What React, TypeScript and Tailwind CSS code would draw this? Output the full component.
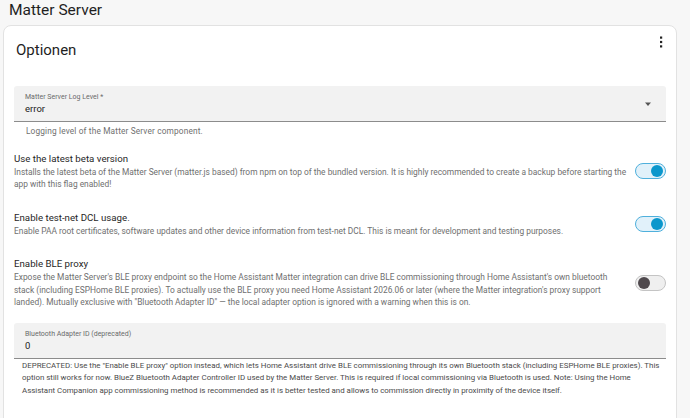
import React from "react"

// settings rows on the options card
const rows = [
  {
    title: "Use the latest beta version",
    desc: "Installs the latest beta of the Matter Server (matter.js based) from npm on top of the bundled version. It is highly recommended to create a backup before starting the app with this flag enabled!",
    on: true,
  },
  {
    title: "Enable test-net DCL usage.",
    desc: "Enable PAA root certificates, software updates and other device information from test-net DCL. This is meant for development and testing purposes.",
    on: true,
  },
  {
    title: "Enable BLE proxy",
    desc: "Expose the Matter Server's BLE proxy endpoint so the Home Assistant Matter integration can drive BLE commissioning through Home Assistant's own bluetooth stack (including ESPHome BLE proxies). To actually use the BLE proxy you need Home Assistant 2026.06 or later (where the Matter integration's proxy support landed). Mutually exclusive with \"Bluetooth Adapter ID\" — the local adapter option is ignored with a warning when this is on.",
    on: false,
  },
]

function Toggle({ on }: { on: boolean }) {
  return (
    <div
      className={`relative w-[31px] h-[16px] rounded-full border shrink-0 ${
        on ? "bg-[#e1f1fa] border-[#4fb0dc]" : "bg-[#efefef] border-[#c4c4c4]"
      }`}
    >
      <div
        className={`absolute top-[1px] w-[12px] h-[12px] rounded-full ${
          on ? "right-[2px] bg-[#0b97cc]" : "left-[2px] bg-[#4f494d]"
        }`}
      />
    </div>
  )
}

function Field({ label, value, arrow }: { label: string; value: string; arrow?: boolean }) {
  return (
    <div className="h-[36px] bg-[#f2f2f2] border-b border-[#8c8c8c] rounded-t-[3px] px-[11px] flex items-center">
      <div className="flex-1 pt-[1px]">
        <div className="text-[7px] leading-[10px] text-[#6a6a6a]">{label}</div>
        <div className="text-[9.5px] leading-[14px] text-[#1c1c1c]">{value}</div>
      </div>
      {arrow && (
        <svg width="8" height="5" viewBox="0 0 8 5" className="mr-[3px] mt-[2px]">
          <path d="M1 0.5h6L4 4z" fill="#555" />
        </svg>
      )}
    </div>
  )
}

export default function App() {
  return (
    <div
      className="w-[690px] h-[418px] overflow-hidden bg-[#f7f7f7]"
      style={{ fontFamily: "Roboto, 'Liberation Sans', sans-serif" }}
    >
      <h1 className="px-[9px] h-[25px] text-[15.5px] leading-[20px] text-[#1f1f1f]">Matter Server</h1>

      <div className="ml-[3px] w-[674px] bg-white border border-[#e2e2e2] rounded-[8px] pb-[40px]">
        {/* card header */}
        <div className="flex items-start justify-between pl-[12px] pr-[9px] pt-[12px] h-[60px]">
          <h2 className="text-[15px] leading-[24px] text-[#1f1f1f]">Optionen</h2>
          <svg width="12" height="14" viewBox="0 0 12 14" className="-mt-[3px]">
            <rect x="5" y="1.5" width="2.2" height="2.2" fill="#222" />
            <rect x="5" y="5.9" width="2.2" height="2.2" fill="#222" />
            <rect x="5" y="10.3" width="2.2" height="2.2" fill="#222" />
          </svg>
        </div>

        <div className="px-[10px]">
          <Field label="Matter Server Log Level *" value="error" arrow />
          <p className="pl-[12px] pt-[3px] text-[8.3px] leading-[12.5px] tracking-[0.15px] text-[#6f6f6f]">
            Logging level of the Matter Server component.
          </p>

          <div className="pt-[14px] flex flex-col gap-[20px]">
            {rows.map((row) => (
              <div key={row.title} className="flex items-center gap-[7px]">
                <div className="flex-1">
                  <div className="text-[9.7px] leading-[14px] text-[#1f1f1f]">{row.title}</div>
                  <div className="text-[8.4px] leading-[12.5px] text-[#6f6f6f]">{row.desc}</div>
                </div>
                <Toggle on={row.on} />
              </div>
            ))}
          </div>

          <div className="pt-[14px]">
            <Field label="Bluetooth Adapter ID (deprecated)" value="0" />
            <p className="pl-[8px] pr-[4px] pt-[1px] text-[7.9px] leading-[12.6px] text-[#4a4a4a]">
              DEPRECATED: Use the "Enable BLE proxy" option instead, which lets Home Assistant drive BLE commissioning
              through its own Bluetooth stack (including ESPHome BLE proxies). This option still works for now. BlueZ
              Bluetooth Adapter Controller ID used by the Matter Server. This is required if local commissioning via
              Bluetooth is used. Note: Using the Home Assistant Companion app commissioning method is recommended as it
              is better tested and allows to commission directly in proximity of the device itself.
            </p>
          </div>
        </div>
      </div>
    </div>
  )
}
